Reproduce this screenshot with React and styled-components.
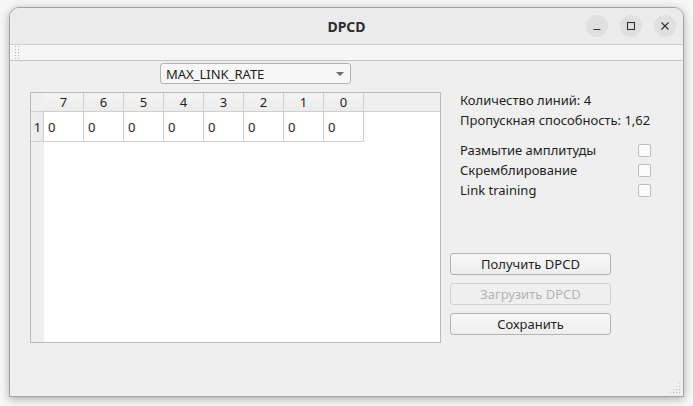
import React from "react";
import styled, { createGlobalStyle } from "styled-components";

const Global = createGlobalStyle`
  html, body { margin: 0; padding: 0; background: #f6f6f6; }
  body { font-family: "Noto Sans", "DejaVu Sans", sans-serif; font-size: 13px; color: #1e1e1e; }
`;

const Page = styled.div`
  width: 693px;
  height: 406px;
  padding: 7px 0 0 9px;
  box-sizing: border-box;
  overflow: hidden;
`;

const Window = styled.div`
  width: 675px;
  height: 390px;
  box-sizing: border-box;
  border: 1px solid #a3a3a3;
  border-radius: 10px 10px 0 0;
  background: #efefef;
  box-shadow: 0 2px 8px rgba(0, 0, 0, 0.3);
  display: flex;
  flex-direction: column;
  position: relative;
  overflow: hidden;
`;

const TitleBar = styled.div`
  height: 36px;
  flex: none;
  background: #ebebeb;
  border-bottom: 1px solid #cdcdcd;
  display: flex;
  align-items: center;
  justify-content: center;
  position: relative;
`;

const Title = styled.div`
  font-weight: 700;
  font-size: 14px;
  color: #2d2d2d;
`;

const Controls = styled.div`
  position: absolute;
  right: 7px;
  top: 7px;
  display: flex;
  gap: 12px;
`;

const CtrlBtn = styled.div`
  width: 22px;
  height: 22px;
  border-radius: 50%;
  background: #e0e0e0;
  display: flex;
  align-items: center;
  justify-content: center;
`;

const ToolStrip = styled.div`
  height: 15px;
  flex: none;
  background: #f5f5f5;
  border-bottom: 1px solid #c4c4c4;
  display: flex;
  align-items: stretch;
  padding-left: 4px;
`;

const Grip = styled.div`
  width: 5px;
  background-image: radial-gradient(circle, #b0b0b0 0.8px, transparent 1px);
  background-size: 3px 3px;
`;

const Content = styled.div`
  flex: 1;
  display: flex;
  padding-left: 20px;
`;

const LeftCol = styled.div`
  width: 411px;
  display: flex;
  flex-direction: column;
`;

const Combo = styled.div`
  margin: 2px 0 0 130px;
  width: 191px;
  height: 21px;
  box-sizing: border-box;
  border: 1px solid #b4b4b4;
  border-radius: 3px;
  background: #f7f7f7;
  display: flex;
  align-items: center;
  justify-content: space-between;
  padding: 0 6px 0 5px;
`;

const Arrow = styled.div`
  width: 0;
  height: 0;
  border-left: 4px solid transparent;
  border-right: 4px solid transparent;
  border-top: 4px solid #6a6a6a;
`;

const Table = styled.div`
  margin-top: 8px;
  width: 411px;
  height: 251px;
  box-sizing: border-box;
  border: 1px solid #b9b9b9;
  background: #fff;
  display: grid;
  grid-template-columns: 13px 1fr;
  grid-template-rows: 19px 1fr;
`;

const Corner = styled.div`
  background: #efefef;
  border-bottom: 1px solid #cfcfcf;
`;

const HHeader = styled.div`
  background: #efefef;
  display: flex;
  border-bottom: 1px solid #cfcfcf;
`;

const HSection = styled.div`
  width: 40px;
  box-sizing: border-box;
  border-right: 1px solid #cfcfcf;
  text-align: center;
  line-height: 18px;
  background: linear-gradient(#f4f4f4, #ebebeb);
`;

const VHeader = styled.div`
  background: #efefef;
`;

const VSection = styled.div`
  height: 30px;
  box-sizing: border-box;
  border-bottom: 1px solid #cfcfcf;
  border-right: 1px solid #cfcfcf;
  display: flex;
  align-items: center;
  justify-content: center;
  padding-left: 1px;
  background: linear-gradient(90deg, #f0f0f0, #e9e9e9);
`;

const Body = styled.div`
  display: flex;
  align-items: flex-start;
`;

const Cell = styled.div`
  width: 40px;
  height: 30px;
  box-sizing: border-box;
  border-right: 1px solid #cfcfcf;
  border-bottom: 1px solid #cfcfcf;
  padding: 6px 0 0 4px;
`;

const RightCol = styled.div`
  margin-left: 9px;
  padding-top: 29px;
  display: flex;
  flex-direction: column;
`;

const InfoLine = styled.div`
  line-height: 20px;
  padding-left: 10px;
`;

const Checks = styled.div`
  margin-top: 10px;
  margin-bottom: 53px;
  width: 201px;
  padding-left: 10px;
  box-sizing: border-box;
`;

const CheckRow = styled.label`
  height: 20px;
  display: flex;
  align-items: center;
  justify-content: space-between;
`;

const Box = styled.span`
  width: 13px;
  height: 13px;
  box-sizing: border-box;
  border: 1px solid #bdbdbd;
  border-radius: 2px;
  background: #fbfbfb;
`;

const Buttons = styled.div`
  display: flex;
  flex-direction: column;
  gap: 8px;
`;

const Button = styled.button`
  width: 161px;
  height: 22px;
  box-sizing: border-box;
  border: 1px solid ${(p) => (p.disabled ? "#d0d0d0" : "#b2b2b2")};
  border-radius: 3px;
  background: ${(p) => (p.disabled ? "#efefef" : "linear-gradient(#f8f8f8, #eeeeee)")};
  font-family: inherit;
  font-size: 13px;
  color: ${(p) => (p.disabled ? "#b4b4b4" : "#1e1e1e")};
  padding: 0;
`;

const SizeGrip = styled.div`
  position: absolute;
  right: 2px;
  bottom: 2px;
  width: 12px;
  height: 12px;
  background-image: radial-gradient(circle, #b5b5b5 0.8px, transparent 1px);
  background-size: 3px 3px;
  clip-path: polygon(100% 0, 100% 100%, 0 100%);
`;

const cols = [7, 6, 5, 4, 3, 2, 1, 0];

export default function App() {
  return (
    <>
      <Global />
      <Page>
        <Window>
          <TitleBar>
            <Title>DPCD</Title>
            <Controls>
              <CtrlBtn>
                <svg width="10" height="10" viewBox="0 0 10 10">
                  <path d="M1.5 8.5h7" stroke="#333" strokeWidth="1.2" />
                </svg>
              </CtrlBtn>
              <CtrlBtn>
                <svg width="10" height="10" viewBox="0 0 10 10">
                  <rect x="1.5" y="1.5" width="7" height="7" fill="none" stroke="#333" strokeWidth="1.1" />
                </svg>
              </CtrlBtn>
              <CtrlBtn>
                <svg width="10" height="10" viewBox="0 0 10 10">
                  <path d="M1.5 1.5l7 7M8.5 1.5l-7 7" stroke="#333" strokeWidth="1.2" />
                </svg>
              </CtrlBtn>
            </Controls>
          </TitleBar>
          <ToolStrip>
            <Grip />
          </ToolStrip>
          <Content>
            <LeftCol>
              <Combo>
                <span>MAX_LINK_RATE</span>
                <Arrow />
              </Combo>
              <Table>
                <Corner />
                <HHeader>
                  {cols.map((c) => (
                    <HSection key={c}>{c}</HSection>
                  ))}
                </HHeader>
                <VHeader>
                  <VSection>1</VSection>
                </VHeader>
                <Body>
                  {cols.map((c) => (
                    <Cell key={c}>0</Cell>
                  ))}
                </Body>
              </Table>
            </LeftCol>
            <RightCol>
              <InfoLine>Количество линий: 4</InfoLine>
              <InfoLine>Пропускная способность: 1,62</InfoLine>
              <Checks>
                <CheckRow>
                  Размытие амплитуды
                  <Box />
                </CheckRow>
                <CheckRow>
                  Скремблирование
                  <Box />
                </CheckRow>
                <CheckRow>
                  Link training
                  <Box />
                </CheckRow>
              </Checks>
              <Buttons>
                <Button>Получить DPCD</Button>
                <Button disabled>Загрузить DPCD</Button>
                <Button>Сохранить</Button>
              </Buttons>
            </RightCol>
          </Content>
          <SizeGrip />
        </Window>
      </Page>
    </>
  );
}
